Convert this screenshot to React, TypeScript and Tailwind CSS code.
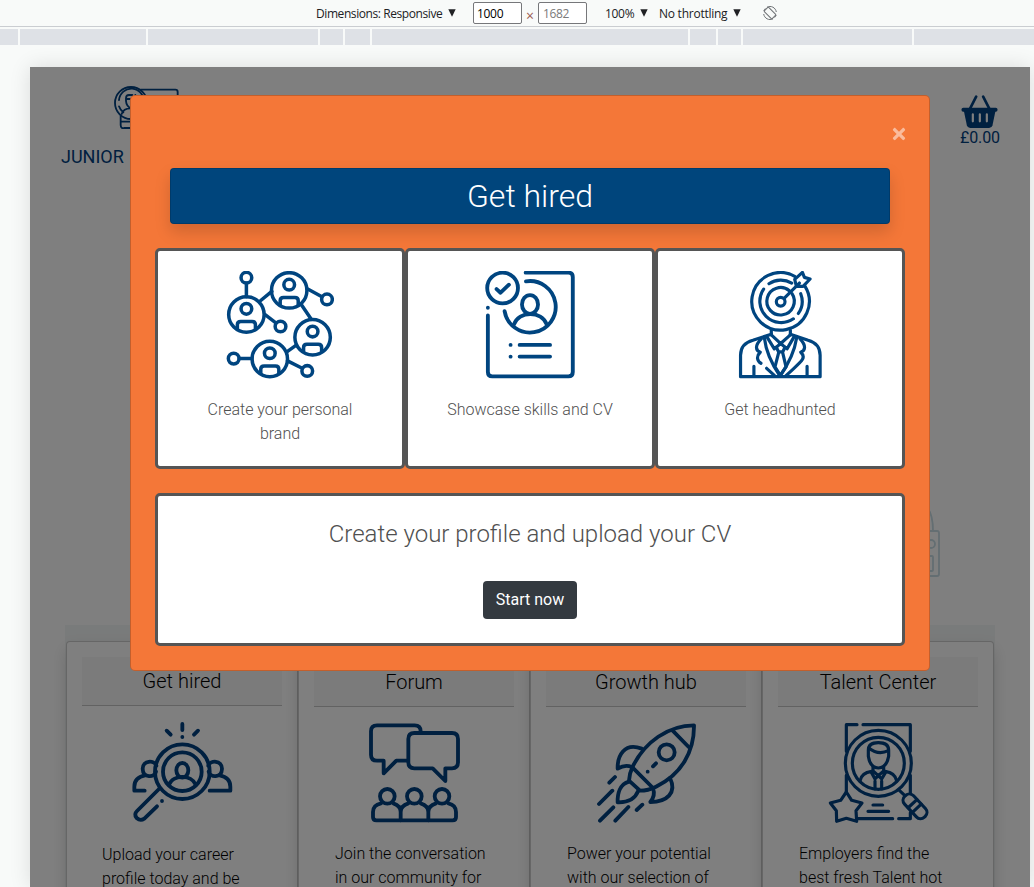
import React from "react";
import { FaTimes } from "react-icons/fa";

type IconProps = { viewBox: string; className: string; strokeWidth: number; children: React.ReactNode };

function LineIcon({ viewBox, className, strokeWidth, children }: IconProps) {
  return (
    <svg
      viewBox={viewBox}
      className={className}
      fill="none"
      stroke="currentColor"
      strokeWidth={strokeWidth}
      strokeLinecap="round"
      strokeLinejoin="round"
    >
      {children}
    </svg>
  );
}

function NetworkPerson({ x, y }: { x: number; y: number }) {
  return (
    <g transform={`translate(${x} ${y})`}>
      <circle r="53" />
      <circle cy="-17" r="16" />
      <path d="M-27 43V31Q-27 21 -17 21H17Q27 21 27 31V43" />
    </g>
  );
}

function NetworkIcon() {
  return (
    <LineIcon viewBox="34 33 323 323" className="size-[108px] shrink-0 text-[#004580]" strokeWidth={10.5}>
      <NetworkPerson x={95} y={163} />
      <NetworkPerson x={223} y={91} />
      <NetworkPerson x={293} y={231} />
      <NetworkPerson x={165} y={296} />
      <circle cx="95" cy="53" r="16" />
      <circle cx="336" cy="118" r="16" />
      <circle cx="197" cy="199" r="16" />
      <circle cx="57" cy="295" r="16" />
      <circle cx="277" cy="332" r="16" />
      <path d="M95 70V110M137 122L171 94M277 86L321 110M259 133L287 174M150 163L183 188M217 274L242 256M218 302L262 324M74 295H111" />
    </LineIcon>
  );
}

function ResumeIcon() {
  return (
    <LineIcon viewBox="4.5 33 323 323" className="size-[108px] shrink-0 text-[#004580]" strokeWidth={11.5}>
      <circle cx="84" cy="84" r="46" />
      <path d="M66 87L78 98L103 74" />
      <path d="M153 38H281Q294 38 294 51V335Q294 348 281 348H53Q40 348 40 335V166M40 143V143.1" />
      <path d="M154 64A77 77 0 1 1 90 153" />
      <ellipse cx="166" cy="133" rx="24" ry="28" />
      <path d="M118 193C132 151 202 151 216 193" />
      <path d="M108 254V254.1M135 254H226M108 289V289.1M135 289H226" />
    </LineIcon>
  );
}

function HeadhuntIcon() {
  return (
    <LineIcon viewBox="4.5 33 323 323" className="size-[108px] shrink-0 text-[#004580]" strokeWidth={9.5}>
      <path d="M210 49A86 86 0 1 0 241 79" />
      <path d="M133 71A64 64 0 0 1 201 69M117 87A64 64 0 0 0 206 176M228 101A64 64 0 0 1 221 160" />
      <path d="M194 92A41 41 0 1 0 202 101" />
      <circle cx="168" cy="125" r="13" />
      <path d="M179 114L224 69M215 79L210 58L233 37L239 52L256 57L235 79Z" />
      <path d="M140 210V224M197 210V224" />
      <path d="M140 222L85 240Q48 250 48 285V349H286V285Q286 250 250 240L197 222" />
      <path d="M127 230L149 266L168 250L187 266L208 230M140 224L168 250L197 224" />
      <path d="M119 232Q126 290 166 347Q207 290 216 232" />
      <path d="M155 261L162 275H174L181 261M162 277L151 320L167 345L184 320L174 277" />
      <path d="M110 236C89 257 94 271 107 276C93 289 99 304 109 309M126 324L149 345M226 236C246 257 241 271 228 276C248 294 227 305 184 346" />
      <path d="M88 318V346M247 318V346" />
    </LineIcon>
  );
}

function SearchPeopleIcon() {
  return (
    <LineIcon viewBox="250 306 300 300" className="size-[100px] overflow-visible text-[#004080]" strokeWidth={11.5}>
      <circle cx="398" cy="455" r="82" />
      <circle cx="398" cy="455" r="58" />
      <ellipse cx="398" cy="451" rx="18" ry="22" />
      <path d="M358 494C370 463 426 463 438 494" />
      <path d="M398 312V330M398 351V351.1M351 332L363 344M445 332L433 344" />
      <path d="M320 437C314 420 279 420 279 446C279 475 316 473 319 455M476 437C482 420 517 420 517 446C517 475 480 473 477 455" />
      <path d="M286 466Q254 472 254 500V512H285M510 466Q542 472 542 500V512H480" />
      <path d="M328 507L262 573Q252 583 261 594Q272 604 284 596L322 559M337 543V543.1" />
    </LineIcon>
  );
}

function ForumIcon() {
  return (
    <LineIcon viewBox="195 188 300 300" className="size-[100px] text-[#004080]" strokeWidth={11.5}>
      <path d="M362 213Q362 195 344 195H231Q213 195 213 213V283Q213 301 231 301H251V339L289 301H320" />
      <path d="M343 218H456Q474 218 474 236V306Q474 324 456 324H436V362L398 324H343Q325 324 325 306V236Q325 218 343 218Z" />
      <circle cx="262" cy="408" r="22" />
      <circle cx="343" cy="408" r="22" />
      <circle cx="426" cy="408" r="22" />
      <path d="M243 429Q219 434 219 455V470Q219 480 229 480H458Q468 480 468 470V455Q468 434 445 429" />
      <path d="M280 429Q302 436 302 455V480M325 429Q302 436 302 455M362 429Q385 436 385 455V480M408 429Q385 436 385 455" />
    </LineIcon>
  );
}

function RocketIcon() {
  return (
    <LineIcon viewBox="201 188 300 300" className="size-[100px] text-[#004080]" strokeWidth={11.5}>
      <path d="M492 195C415 195 344 245 308 319C299 337 298 347 297 361L330 391C349 391 364 386 378 379C453 343 493 275 492 195Z" />
      <path d="M428 211L476 260M308 322L366 380" />
      <circle cx="410" cy="276" r="24" />
      <path d="M378 309L369 318M353 334V334.1" />
      <path d="M335 265C282 245 262 288 263 325Q286 311 305 320" />
      <path d="M420 353C442 398 410 425 361 425Q377 405 369 384" />
      <path d="M297 364C269 372 262 401 263 426C292 427 315 417 325 391" />
      <path d="M255 350L238 367M247 391L207 431M250 441L210 481M295 440L256 481M337 433L320 449" />
    </LineIcon>
  );
}

function TalentIcon() {
  return (
    <LineIcon viewBox="207 188 300 300" className="size-[100px] overflow-visible text-[#004080]" strokeWidth={9.5}>
      <circle cx="355" cy="309" r="99" />
      <circle cx="355" cy="309" r="78" />
      <path d="M259 273V193H291M309 193H451V273M451 345V400M259 345V394M294 475H398M416 475H451V457" />
      <path d="M325 270Q325 247 355 247Q386 247 386 270V288Q380 322 355 323Q330 322 325 288Z" />
      <path d="M326 263Q355 286 385 271" />
      <path d="M300 362Q304 337 335 333M410 362Q406 337 375 333" />
      <path d="M339 320V332L355 346L371 332V320M333 334L345 356L355 346L365 356L378 334M345 386V362M365 386V362" />
      <path d="M259 395L275 420L306 428L288 451L290 483L259 474L230 483L229 451L211 428L242 420Z" />
      <path d="M339 434H368M324 453H386M418 390L434 405" />
      <g transform="translate(465 438) rotate(47)">
        <rect x="-43" y="-18.5" width="86" height="37" rx="17" />
        <path d="M-11 -18V18M8 -18V18" />
      </g>
    </LineIcon>
  );
}

function LogoMark() {
  return (
    <LineIcon viewBox="338 195 201 141" className="h-[47px] w-[67px] text-[#004080]" strokeWidth={5.5}>
      <circle cx="392" cy="249" r="48" />
      <path d="M356 259A37 37 0 0 0 369 277M356 240A37 37 0 0 1 430 246" />
      <path d="M396 225H386Q377 225 377 235V243Q378 259 392 265M405 225V245Q404 260 392 265M364 282Q370 264 392 265M378 237H394" />
      <path d="M422 209H525Q532 209 532 216V324H373Q361 327 361 315V288M361 305H400" />
    </LineIcon>
  );
}

function BasketIcon() {
  return (
    <svg viewBox="363 103 110 99" className="h-[33px] w-[37px]">
      <path d="M408 108L390 143M429 108L447 143" stroke="currentColor" strokeWidth="8" strokeLinecap="round" />
      <rect x="364" y="141" width="108" height="12" rx="5" fill="currentColor" />
      <path d="M371 150H466L457 194Q455 202 447 202H390Q382 202 380 194Z" fill="currentColor" />
      <path d="M398 161V182M419 161V182M440 161V182" stroke="white" strokeWidth="6.5" strokeLinecap="round" />
    </svg>
  );
}

function Caret() {
  return (
    <svg viewBox="0 0 8 8" className="block size-[8px]" fill="currentColor">
      <path d="M0.3 0.3H7.7L4 7.7Z" />
    </svg>
  );
}

const segments = [
  "w-[18px]",
  "w-[126px]",
  "w-[170px]",
  "w-[23px]",
  "w-[25px]",
  "w-[316px]",
  "w-[26px]",
  "w-[23px]",
  "w-[169px]",
  "w-[120px]",
];

function DeviceToolbar() {
  return (
    <div className="h-[45px] bg-[#f8faf9] font-['Open_Sans',sans-serif] text-[12px] text-[#202124]">
      <div className="flex h-[27px] items-center border-b border-[#cacdd1] pl-[316px] leading-none">
        <span className="w-[127px] whitespace-nowrap pt-px tracking-[-0.42px]">Dimensions: Responsive</span>
        <span className="ml-[5px]"><Caret /></span>
        <span className="ml-[17px] flex h-[22px] w-[49px] items-center rounded-[2px] border border-[#76777a] bg-white pl-[3px] pt-px tracking-[-0.3px] text-black">1000</span>
        <span className="ml-1 w-[8px] pt-[5px] text-[14px] text-[#9b5c52]">×</span>
        <span className="ml-1 flex h-[22px] w-[49px] items-center rounded-[2px] border border-[#76777a] bg-white pl-[4px] pt-px tracking-[-0.4px] text-[#7a7a7a]">1682</span>
        <span className="ml-[18px] w-[30px] pt-px tracking-[-0.3px]">100%</span>
        <span className="ml-[5px]"><Caret /></span>
        <span className="ml-[11px] w-[70px] whitespace-nowrap pt-px tracking-[-0.25px]">No throttling</span>
        <span className="ml-[4px]"><Caret /></span>
        <svg viewBox="0 0 14 14" className="ml-[22px] size-[14px] text-[#6e7175]" fill="none" stroke="currentColor">
          <path d="M4 1.2A6.4 6.4 0 0 1 13.3 6M10 12.8A6.4 6.4 0 0 1 .7 8M.8 5A6.4 6.4 0 0 1 2.3 2.5M13.2 9a6.4 6.4 0 0 1-1.5 2.5" />
          <rect x="3.9" y="1.4" width="6.2" height="11.2" rx="1" transform="rotate(-45 7 7)" />
        </svg>
      </div>
      <div className="mt-[2px] flex h-4 gap-[2px]">
        {segments.map((s, i) => (
          <div key={i} className={`${s} shrink-0 bg-[#dee1e6]`} />
        ))}
      </div>
    </div>
  );
}

const services = [
  { title: "Get hired", icon: <SearchPeopleIcon />, lines: ["Upload your career", "profile today and be"], head: "h-[49px]", gap: "mt-4", text: "mt-[21px] pl-5" },
  { title: "Forum", icon: <ForumIcon />, lines: ["Join the conversation", "in our community for"], head: "h-[50px]", gap: "mt-4", text: "mt-[19px] pl-[21px]" },
  { title: "Growth hub", icon: <RocketIcon />, lines: ["Power your potential", "with our selection of"], head: "h-[50px]", gap: "mt-4", text: "mt-[19px] pl-[21px]" },
  { title: "Talent Center", icon: <TalentIcon />, lines: ["Employers find the", "best fresh Talent hot"], head: "h-[50px]", gap: "mt-4", text: "mt-[19px] pl-[21px]" },
];

function SitePage() {
  return (
    <div className="flex h-full flex-col bg-white">
      <header className="flex h-[110px] shrink-0 justify-between pl-[31px] pr-[30px]">
        <div className="pt-[18px]">
          <div className="pl-[52px]"><LogoMark /></div>
          <div className="mt-[12px] text-[18px] leading-[26px] text-[#004080]">JUNIOR</div>
        </div>
        <div className="flex flex-col items-center pt-[28px] text-[#004080]">
          <BasketIcon />
          <span className="-mt-px text-[16px] leading-[22px] tracking-[-0.1px]">£0.00</span>
        </div>
      </header>
      <div className="flex h-[448px] shrink-0 justify-end pr-[90px] pt-[325px]">
        <svg viewBox="0 0 60 78" className="h-[78px] w-[60px] text-[#c8dce4]" fill="none" stroke="currentColor" strokeWidth="1.8">
          <path d="M24 28V20Q26 1 38 1C50 2 53 14 53 29" />
          <rect x="14" y="29" width="45" height="45" rx="2" />
          <circle cx="51" cy="42" r="4" />
          <rect x="43" y="54" width="10" height="15" rx="1" />
        </svg>
      </div>
      <section className="ml-[35px] w-[930px] flex-1 bg-[#f3f6f6] pl-px pt-4">
        <div className="flex h-[330px]">
          {services.map((s) => (
            <article
              key={s.title}
              className="flex w-[232px] shrink-0 flex-col items-center rounded-[4px] border border-black/20 bg-white px-[15px] pt-[15px] shadow-[0_8px_16px_rgba(0,0,0,0.15)]"
            >
              <h3 className={`${s.head} flex w-full shrink-0 items-center justify-center border-b border-black/20 bg-[#f7f7f7] text-[20px] font-light text-black`}>
                {s.title}
              </h3>
              <div className={`${s.gap} pl-px`}>{s.icon}</div>
              <p className={`${s.text} w-full whitespace-nowrap text-[16px] font-light leading-6 text-black`}>
                {s.lines[0]}
                <br />
                {s.lines[1]}
              </p>
            </article>
          ))}
        </div>
      </section>
    </div>
  );
}

const steps = [
  { icon: <NetworkIcon />, label: "Create your personal brand" },
  { icon: <ResumeIcon />, label: "Showcase skills and CV" },
  { icon: <HeadhuntIcon />, label: "Get headhunted" },
];

function HiringDialog() {
  return (
    <div role="dialog" className="mt-[28px] h-[576px] w-[800px] rounded-[5px] border border-black/20 bg-[#f47738] px-6 text-[#505050]">
      <div className="flex h-[72px] justify-end pt-[29px]">
        <button aria-label="Close" className="-mr-[3px] flex size-[18px] items-center justify-center text-[18px] text-white/50">
          <FaTimes />
        </button>
      </div>
      <h2 className="mx-[15px] flex h-14 items-center justify-center rounded-[4px] border border-black/15 bg-[#00457c] text-[32px] font-light text-white shadow-[0_8px_16px_rgba(0,0,0,0.15)]">
        Get hired
      </h2>
      <div className="mt-6 flex h-[221px]">
        {steps.map((s) => (
          <div key={s.label} className="flex w-[250px] flex-col items-center rounded-[5px] border-[3px] border-[#555] bg-white px-[30px] pt-[19.5px]">
            {s.icon}
            <p className="mt-[19px] w-[180px] text-center text-[16px] font-light leading-6">{s.label}</p>
          </div>
        ))}
      </div>
      <div className="mt-6 flex h-[153px] flex-col items-center rounded-[5px] border-[3px] border-[#555] bg-white pt-6">
        <p className="text-[24px] font-light leading-[29px]">Create your profile and upload your CV</p>
        <button className="mt-8 h-[38px] w-[94px] rounded-[4px] bg-[#343a40] text-[16px] text-white">Start now</button>
      </div>
    </div>
  );
}

export default function App() {
  return (
    <div className="h-[887px] w-[1034px] overflow-hidden bg-[#f8faf9] font-[Roboto,sans-serif]">
      <DeviceToolbar />
      <div className="h-[842px] overflow-hidden pl-[30px] pt-[22px]">
        <div className="relative h-[820px] w-[1000px] shadow-[0_0_20px_rgba(0,0,0,0.12)]">
          <div className="h-full overflow-hidden"><SitePage /></div>
          <div className="absolute inset-0 flex items-start justify-center bg-black/50">
            <HiringDialog />
          </div>
        </div>
      </div>
    </div>
  );
}
